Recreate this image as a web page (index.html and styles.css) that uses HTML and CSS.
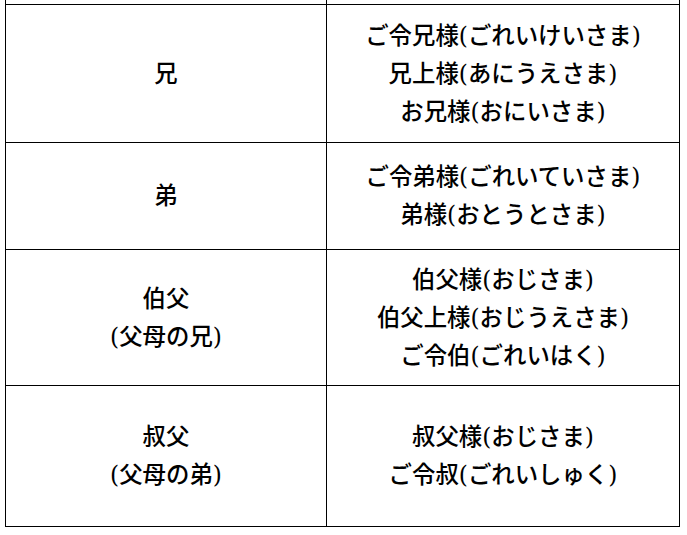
FILE: index.html
```html
<!DOCTYPE html>
<html lang="ja">
<head>
<meta charset="utf-8">
<title>敬称</title>
<link rel="stylesheet" href="styles.css">
</head>
<body>
<table class="honorifics">
  <tr class="row-cut">
    <td class="col-left"></td>
    <td class="col-right"></td>
  </tr>
  <tr class="row-a">
    <td class="col-left">兄</td>
    <td class="col-right">ご令兄様(ごれいけいさま)<br>兄上様(あにうえさま)<br>お兄様(おにいさま)</td>
  </tr>
  <tr class="row-b">
    <td class="col-left">弟</td>
    <td class="col-right">ご令弟様(ごれいていさま)<br>弟様(おとうとさま)</td>
  </tr>
  <tr class="row-c">
    <td class="col-left">伯父<br>(父母の兄)</td>
    <td class="col-right">伯父様(おじさま)<br>伯父上様(おじうえさま)<br>ご令伯(ごれいはく)</td>
  </tr>
  <tr class="row-d">
    <td class="col-left">叔父<br>(父母の弟)</td>
    <td class="col-right">叔父様(おじさま)<br>ご令叔(ごれいしゅく)</td>
  </tr>
</table>
</body>
</html>
```

FILE: styles.css
```css
html, body {
  margin: 0;
  padding: 0;
  background: #ffffff;
}

body {
  padding-left: 5px;
  font-family: "DejaVu Serif", "Noto Sans CJK JP", serif;
  color: #000000;
}

.honorifics {
  border-collapse: collapse;
  table-layout: fixed;
  width: 675px;
}

.honorifics td {
  border: 1px solid #000000;
  padding: 0;
  text-align: center;
  vertical-align: middle;
  font-size: 23.4px;
  font-weight: 500;
  line-height: 38px;
}

.col-left {
  width: 320px;
}

.row-cut td {
  border-top: 0;
  height: 4px;
  line-height: 4px;
}

.row-a td { height: 137px; }
.row-b td { height: 106px; }
.row-c td { height: 135px; }
.row-d td { height: 140px; }
```
